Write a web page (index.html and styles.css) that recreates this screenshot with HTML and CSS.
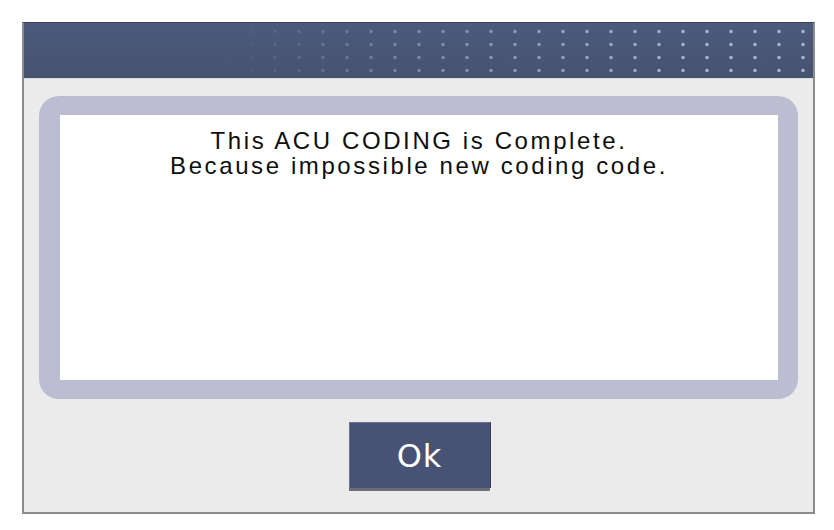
FILE: index.html
```html
<!DOCTYPE html>
<html>
<head>
<meta charset="utf-8">
<link rel="stylesheet" href="styles.css">
</head>
<body>
<div class="dialog">
  <div class="header"><div class="dots"></div></div>
  <div class="body">
    <div class="frame">
      <div class="message">
        <p>This ACU CODING is Complete.</p>
        <p>Because impossible new coding code.</p>
      </div>
    </div>
    <div class="actions">
      <button class="ok">Ok</button>
    </div>
  </div>
</div>
</body>
</html>
```
FILE: styles.css
```css
html, body {
  margin: 0;
  padding: 0;
  background: #ffffff;
}
body {
  width: 834px;
  height: 530px;
  padding-top: 22px;
  box-sizing: border-box;
}
.dialog {
  margin-left: 22px;
  width: 793px;
  height: 492px;
  box-sizing: border-box;
  border: 2px solid #8c8c8c;
  border-top: 1px solid #3a4258;
  background: #ebebeb;
  display: flex;
  flex-direction: column;
}
.header {
  height: 55px;
  background: linear-gradient(#4c5a7c, #46536f);
  position: relative;
  border-bottom: 1px solid #d8dbe4;
}
.dots {
  position: absolute;
  inset: 0;
  background-image: radial-gradient(circle at center, rgba(185,196,224,1) 0, rgba(185,196,224,0.8) 1.2px, rgba(185,196,224,0) 2.2px);
  background-size: 24px 13px;
  background-position: -1px 2px;
  -webkit-mask-image: linear-gradient(to right, rgba(0,0,0,0) 25%, rgba(0,0,0,0.55) 50%, rgba(0,0,0,1) 85%);
  mask-image: linear-gradient(to right, rgba(0,0,0,0) 25%, rgba(0,0,0,0.55) 50%, rgba(0,0,0,1) 85%);
}
.body {
  flex: 1;
  display: flex;
  flex-direction: column;
  padding: 17px 15px 0 15px;
}
.frame {
  height: 303px;
  box-sizing: border-box;
  border: 19px solid #bcbdd0;
  border-left-width: 21px;
  border-right-width: 20px;
  border-radius: 20px;
  background: #bcbdd0;
}
.message {
  height: 100%;
  background: #ffffff;
  padding-top: 13px;
  box-sizing: border-box;
  text-align: center;
  font-family: "Liberation Sans", Arial, sans-serif;
  font-size: 24px;
  line-height: 25px;
  letter-spacing: 2.6px;
  color: #0e0e0e;
}
.message p {
  margin: 0;
}
.actions {
  display: flex;
  justify-content: center;
  padding-top: 23px;
}
.ok {
  width: 141px;
  height: 66px;
  margin-left: 2px;
  border: none;
  background: #475275;
  box-shadow: inset 1px 1px 0 #6a7496, 0 3px 0 #6e6e78, 1px 0 0 #3a3f55;
  color: #ffffff;
  font-family: "DejaVu Sans", sans-serif;
  font-size: 32px;
  letter-spacing: 1px;
  padding: 2px 0 0 0;
}
```
